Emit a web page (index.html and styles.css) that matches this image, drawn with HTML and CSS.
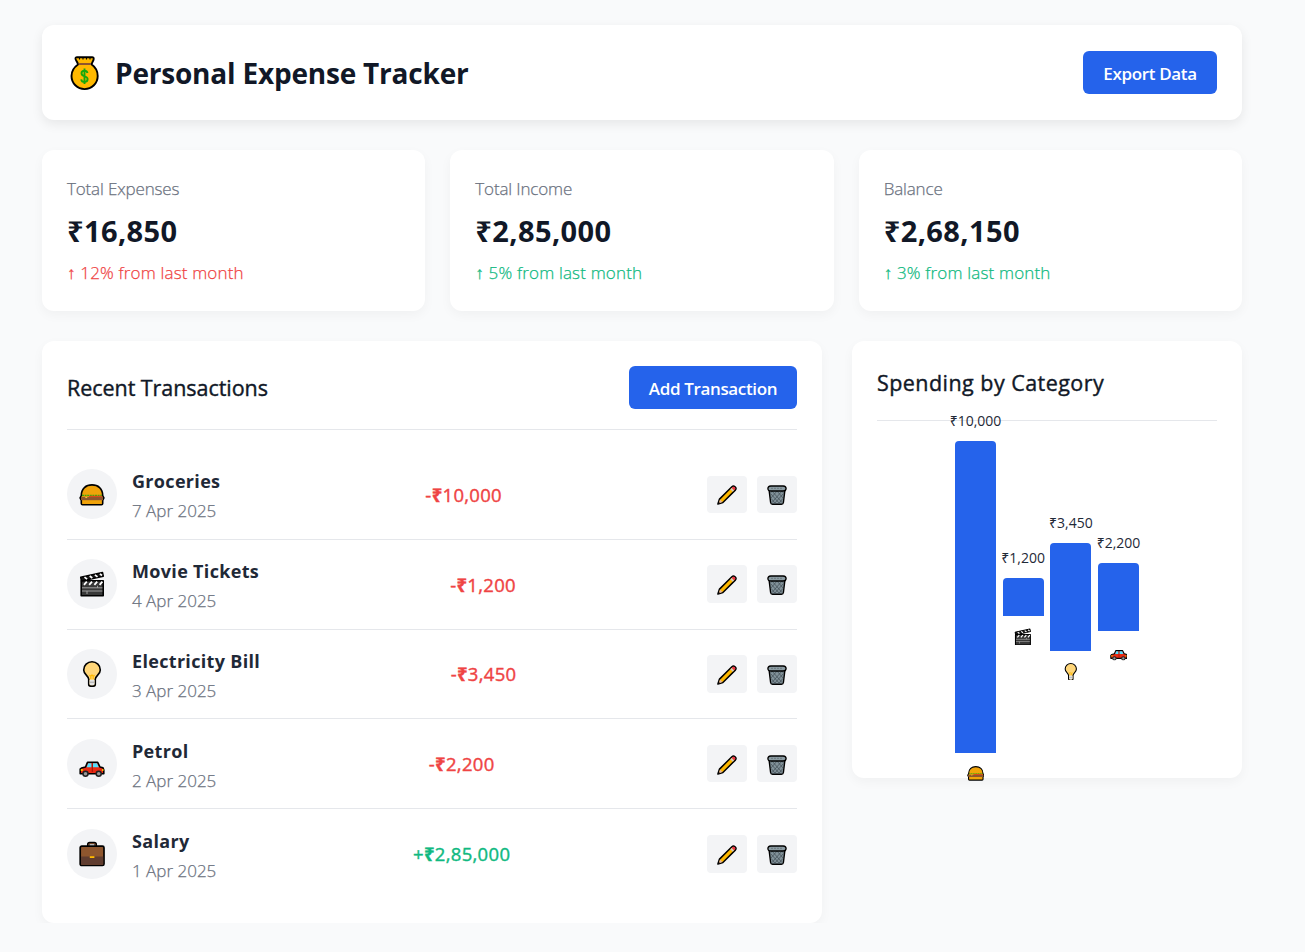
FILE: index.html
```html
<!DOCTYPE html>
<html lang="en">
<head>
<meta charset="utf-8">
<title>Personal Expense Tracker</title>
<link rel="stylesheet" href="styles.css">
</head>
<body>
<svg class="sprite" aria-hidden="true">
  <symbol id="bag" viewBox="0 0 36 36">
    <path d="M10 2.300h15.200q1.600 0 1.500 1.600c-.2 2.400-1.700 2.800-2 5.600 4 2.800 6 6.500 6 11.500a13.100 13.100 0 0 1-26.200 0c0-5 2.500-8.700 6.500-11.500-.3-2.800-2-3.200-2.500-5.600q-.1-1.600 1.500-1.600z" fill="#ffb900" stroke="#000" stroke-width="1.900" stroke-linejoin="round"/>
    <path d="M12.500 2.500v2M16 2.500v2M19.500 2.500v2M23 2.500v2" stroke="#000" stroke-width="1.100"/>
    <path d="M11.800 9h12.200" stroke="#8e562e" stroke-width="2"/>
    <path d="M20.500 18c-.4-1.800-1.500-2.400-3-2.400-1.900 0-3 1.100-3 2.700 0 4 6.100 2.300 6.100 5.800 0 1.800-1.300 2.900-3.100 2.900-1.700 0-3-.8-3.300-2.700M17.500 13.500v15.500" fill="none" stroke="#16a80c" stroke-width="1.900"/>
  </symbol>
  <symbol id="burger" viewBox="0 0 26 26">
    <path d="M2.300 14.500C2.300 7.500 7 3.900 13 3.900s10.700 3.600 10.700 10.600l1.200 2.300-1.200 2.500v3.200q0 1.300-1.300 1.300H3.600q-1.300 0-1.300-1.300v-3.200l-1.200-2.500z" fill="#f0a30a" stroke="#000" stroke-width="1.600" stroke-linejoin="round"/>
    <path d="M3 14.300h20" stroke="#16a80c" stroke-width="1" stroke-dasharray="2 .6"/>
    <path d="M2 15.800h22v3.400H2z" fill="#8e562e"/><path d="M10 14.800h13v1.300H10z" fill="#da4b1b"/><path d="M5.800 15.900h2.800l-1.400 1.300z" fill="#ffd33d"/>
  </symbol>
  <symbol id="clapper" viewBox="0 0 26 26">
    <path d="M2.200 9.800h22v15h-22z" fill="#383838" stroke="#000" stroke-width="1.600" stroke-linejoin="round"/>
    <path d="M1.700 6.300 23.500 1.500l.8 3.700-21.800 4.900z" fill="#171717" stroke="#000" stroke-width="1.500" stroke-linejoin="round"/>
    <path d="m5.500 6.200 2.600 2M10.700 5l2.600 2M15.900 3.900l2.600 2M20.900 2.800 23 4.500" stroke="#fff" stroke-width="1.700"/>
    <path d="M7.800 10.600 5 13.800M13 10.600l-2.800 3.200M18.200 10.600l-2.800 3.200M23.400 10.600l-2.800 3.200" stroke="#fff" stroke-width="1.800"/>
    <path d="M3 16.800h20.400M3 20h20.400M18.500 16.800v-2M8 20v3" stroke="#aaa" stroke-width=".9"/>
  </symbol>
  <symbol id="bulb" viewBox="0 0 26 26">
    <path d="M9.700 18.300C9.500 14.500 4.700 13.400 4.700 8.900a8.300 8.100 0 0 1 16.600 0c0 4.500-4.800 5.600-5 9.400v5q0 1.800-1.800 1.800h-3q-1.800 0-1.800-1.800z" fill="#ffd679" stroke="#000" stroke-width="1.600"/>
    <path d="m10.500 14 1.300 1.300 1.200-1.300 1.200 1.300 1.300-1.300M11.800 15v3M14.200 15v3" fill="none" stroke="#ffb900" stroke-width="1.200"/>
    <path d="M10.500 19h5v3.500q0 1.700-1.500 1.700h-2q-1.500 0-1.500-1.700z" fill="#e5e5e5"/><path d="M10.500 21.200h5" stroke="#999" stroke-width=".8"/>
  </symbol>
  <symbol id="car" viewBox="0 0 26 26">
    <path d="M1.200 18.200 2.500 17l4-1 2-4.700h10.200l2.300 4.700 3 .7.800 2.200v3.800H1.200z" fill="#e92a13" stroke="#000" stroke-width="1.600" stroke-linejoin="round"/>
    <path d="m7.700 16.300 1.500-4h3.300v4zM14 12.300h4l1.800 4H14z" fill="#50e0ff"/>
    <path d="M13.300 12v9" stroke="#8c1007" stroke-width=".8"/><path d="M1.800 18h2v2h-2z" fill="#ffb900"/>
    <path d="M23 18h1.500v2H23z" fill="#ffb900"/>
    <circle cx="6.500" cy="22.700" r="2.500" fill="#999" stroke="#222" stroke-width="1.500"/><circle cx="19.700" cy="22.700" r="2.500" fill="#999" stroke="#222" stroke-width="1.500"/>
  </symbol>
  <symbol id="briefcase" viewBox="0 0 26 26">
    <path d="M9.200 6V3.500q0-1.500 1.500-1.500h4.600q1.500 0 1.500 1.500V6" fill="none" stroke="#000" stroke-width="2.500"/>
    <path d="M9.500 6V3.700q0-1.200 1.200-1.200h4.600q1.200 0 1.200 1.200V6" fill="none" stroke="#8e562e" stroke-width=".8"/>
    <rect x="1.200" y="5.200" width="23.800" height="19.300" rx="1.600" fill="#8e562e" stroke="#000" stroke-width="1.700"/>
    <path d="M2 15.500h22.200v8.200H2z" fill="#603d30"/><path d="M10.800 15.200h4.600v1.800h-4.600z" fill="#ffb900"/>
  </symbol>
  <symbol id="pencil" viewBox="0 0 20 20">
    <path d="m.9 19.100 1.600-5L14.900 1.700q1.500-1.500 3 0l.4.400q1.500 1.500 0 3L5.900 17.500z" fill="#ffb900" stroke="#000" stroke-width="1.500" stroke-linejoin="round"/>
    <path d="m3 14.500 2.500 2.500-3.800 1.400z" fill="#e6b59a"/><path d="m1.200 18.900.6-1.900 1.400 1.300z"/>
    <path d="m13.300 4.300 1.200-1.200 2.500 2.500-1.200 1.200z" fill="#ccc"/><path d="m14.800 2.900.8-.8q1-.8 1.900 0l.5.500q.8 1 0 1.900l-.8.800z" fill="#e8344e"/>
  </symbol>
  <symbol id="trash" viewBox="0 0 20 20">
    <path d="m2.100 5.200 1.500 12.300q.2 1.800 1.900 1.800h9q1.700 0 1.900-1.800L17.900 5.200z" fill="#82929a" stroke="#000" stroke-width="1.400"/>
    <path d="m3.500 8.500 9 10M4.200 13.500l4 5M5 6l10 11.500M10 6l6 7M15 6l1.500 2M16.500 8.500l-9 10M15.800 13.500l-4 5M15 6 5 17.500M10 6l-6 7M5 6 3.500 8" stroke="#46535a" stroke-width=".8"/>
    <path d="M3.800 1h12.400q2.900.3 2.900 2.600 0 2.400-2.900 2.400H3.800Q.9 6 .9 3.600.9 1.300 3.800 1z" fill="#8b9ba2" stroke="#000" stroke-width="1.300"/>
    <path d="M4 3.300h12" stroke="#697980" stroke-width="1" stroke-dasharray="2 1"/>
  </symbol>
</svg>
<div class="container">
  <header class="header">
    <h1 class="brand"><svg class="brand-icon"><use href="#bag"/></svg><span>Personal Expense Tracker</span></h1>
    <button class="btn btn-export">Export Data</button>
  </header>

  <section class="stats">
    <div class="stat"><div class="stat-label">Total Expenses</div><div class="stat-value">₹16,850</div><div class="stat-change down">↑ 12% from last month</div></div>
    <div class="stat"><div class="stat-label">Total Income</div><div class="stat-value">₹2,85,000</div><div class="stat-change up">↑ 5% from last month</div></div>
    <div class="stat"><div class="stat-label">Balance</div><div class="stat-value">₹2,68,150</div><div class="stat-change up">↑ 3% from last month</div></div>
  </section>

  <main class="main">
    <section class="card">
      <div class="card-head"><h2 class="card-title">Recent Transactions</h2><button class="btn btn-add">Add Transaction</button></div>
      <ul class="list">
        <li class="row">
          <div class="info"><span class="avatar"><svg class="icon"><use href="#burger"/></svg></span><div><h3 class="name">Groceries</h3><p class="date">7 Apr 2025</p></div></div>
          <div class="amount down">-<b>₹</b>10,000</div>
          <div class="actions"><button class="act"><svg class="act-icon"><use href="#pencil"/></svg></button><button class="act"><svg class="act-icon"><use href="#trash"/></svg></button></div>
        </li>
        <li class="row">
          <div class="info"><span class="avatar"><svg class="icon"><use href="#clapper"/></svg></span><div><h3 class="name">Movie Tickets</h3><p class="date">4 Apr 2025</p></div></div>
          <div class="amount down">-<b>₹</b>1,200</div>
          <div class="actions"><button class="act"><svg class="act-icon"><use href="#pencil"/></svg></button><button class="act"><svg class="act-icon"><use href="#trash"/></svg></button></div>
        </li>
        <li class="row">
          <div class="info"><span class="avatar"><svg class="icon"><use href="#bulb"/></svg></span><div><h3 class="name">Electricity Bill</h3><p class="date">3 Apr 2025</p></div></div>
          <div class="amount down">-<b>₹</b>3,450</div>
          <div class="actions"><button class="act"><svg class="act-icon"><use href="#pencil"/></svg></button><button class="act"><svg class="act-icon"><use href="#trash"/></svg></button></div>
        </li>
        <li class="row">
          <div class="info"><span class="avatar"><svg class="icon"><use href="#car"/></svg></span><div><h3 class="name">Petrol</h3><p class="date">2 Apr 2025</p></div></div>
          <div class="amount down">-<b>₹</b>2,200</div>
          <div class="actions"><button class="act"><svg class="act-icon"><use href="#pencil"/></svg></button><button class="act"><svg class="act-icon"><use href="#trash"/></svg></button></div>
        </li>
        <li class="row">
          <div class="info"><span class="avatar"><svg class="icon"><use href="#briefcase"/></svg></span><div><h3 class="name">Salary</h3><p class="date">1 Apr 2025</p></div></div>
          <div class="amount up">+<b>₹</b>2,85,000</div>
          <div class="actions"><button class="act"><svg class="act-icon"><use href="#pencil"/></svg></button><button class="act"><svg class="act-icon"><use href="#trash"/></svg></button></div>
        </li>
      </ul>
    </section>

    <section class="card chart-card">
      <div class="card-head"><h2 class="card-title chart-title">Spending by Category</h2></div>
      <div class="chart">
        <div class="bar" style="height:100%"><span class="bar-value">₹10,000</span><svg class="bar-icon"><use href="#burger"/></svg></div>
        <div class="bar" style="height:12%"><span class="bar-value">₹1,200</span><svg class="bar-icon"><use href="#clapper"/></svg></div>
        <div class="bar" style="height:34.5%"><span class="bar-value">₹3,450</span><svg class="bar-icon"><use href="#bulb"/></svg></div>
        <div class="bar" style="height:22%"><span class="bar-value">₹2,200</span><svg class="bar-icon"><use href="#car"/></svg></div>
      </div>
    </section>
  </main>
</div>
</body>
</html>
```
FILE: styles.css
```css
* { box-sizing: border-box; margin: 0; padding: 0; }
body { background: #f9fafb; color: #1f2937; font-family: "Open Sans", "Noto Sans", sans-serif; overflow: hidden; }
svg { display: block; }
.sprite { position: absolute; width: 0; height: 0; }
.container { width: 1200px; margin: 25px 0 0 42px; }

.header { display: flex; justify-content: space-between; align-items: center; height: 95px; padding: 0 25px; margin-bottom: 30px; background: #fff; border-radius: 12px; box-shadow: 0 4px 12px rgba(0, 0, 0, .08); }
.brand { display: flex; align-items: center; gap: 12px; color: #111827; font-size: 28px; font-weight: 700; line-height: 40px; letter-spacing: -.2px; white-space: nowrap; }
.brand-icon { width: 36px; height: 36px; }
.btn { height: 43px; border: 0; border-radius: 6px; background: #2563eb; color: #fff; font: 600 17px/43px "Open Sans", "Noto Sans", sans-serif; letter-spacing: -.35px; white-space: nowrap; }
.btn-export { width: 134px; margin-bottom: 1px; line-height: 45px; }
.btn-add { width: 168px; line-height: 45px; }

.stats { display: grid; grid-template-columns: repeat(3, 1fr); gap: 25px; margin-bottom: 30px; }
.stat { height: 161px; padding: 25px; background: #fff; border-radius: 12px; box-shadow: 0 4px 12px rgba(0, 0, 0, .04); white-space: nowrap; }
.stat-label { color: #6b7280; font-size: 17px; font-weight: 300; line-height: 28px; letter-spacing: -.15px; -webkit-text-stroke: .25px; }
.stat-value { color: #111827; font-size: 29px; font-weight: 700; line-height: 56px; letter-spacing: .4px; }
.stat-change { font-size: 17px; font-weight: 300; line-height: 27px; letter-spacing: .17px; -webkit-text-stroke: .25px; }
.down { color: #ef4444; }
.up { color: #10b981; }

.main { display: grid; grid-template-columns: 780px 390px; gap: 30px; align-items: start; }
.card { height: 582px; padding: 25px; background: #fff; border-radius: 12px; box-shadow: 0 4px 12px rgba(0, 0, 0, .04); }
.chart-card { height: 437px; }
.card-head { display: flex; justify-content: space-between; align-items: center; padding-bottom: 20px; margin-bottom: 20px; border-bottom: 1px solid #e5e7eb; }
.card-title { color: #111827; font-size: 21.5px; font-weight: 400; line-height: 34px; letter-spacing: -.05px; white-space: nowrap; -webkit-text-stroke: .4px; }
.chart-title { letter-spacing: .45px; }

.list { list-style: none; }
.row { display: flex; justify-content: space-between; align-items: center; height: 89.75px; border-bottom: 1px solid #e5e7eb; white-space: nowrap; }
.row:last-child { border-bottom: 0; }
.info { display: flex; align-items: center; gap: 15px; }
.avatar { display: flex; align-items: center; justify-content: center; width: 50px; height: 50px; border-radius: 50%; background: #f3f4f6; }
.icon { width: 26px; height: 26px; }
.name { padding-top: 2px; font-size: 18px; font-weight: 700; line-height: 32px; letter-spacing: .32px; }
.date { color: #6b7280; font-size: 17px; font-weight: 300; line-height: 28px; letter-spacing: 0; -webkit-text-stroke: .25px; }
.amount { padding-top: 1px; font-size: 18.5px; font-weight: 400; line-height: 30px; letter-spacing: .3px; -webkit-text-stroke: .4px; }
.actions { display: flex; gap: 10px; }
.act { display: flex; align-items: center; justify-content: center; width: 40px; height: 37.5px; padding-top: 2px; border: 0; border-radius: 4px; background: #f3f4f6; }
.act-icon { width: 20px; height: 20px; }

.chart { display: flex; justify-content: center; align-items: center; gap: 6.7px; height: 312px; }
.bar { position: relative; width: 41px; border-radius: 4px 4px 0 0; background: #2563eb; }
.bar-value { position: absolute; bottom: 100%; left: 50%; margin-bottom: 10px; transform: translateX(-50%); font-size: 14px; font-weight: 400; line-height: 20px; letter-spacing: 0; }
.bar-icon { position: absolute; top: calc(100% + 12px); left: 50%; width: 17.6px; height: 17.6px; margin-left: -8.8px; }
.bar:first-child .bar-icon { top: calc(100% + 11px); }
```
